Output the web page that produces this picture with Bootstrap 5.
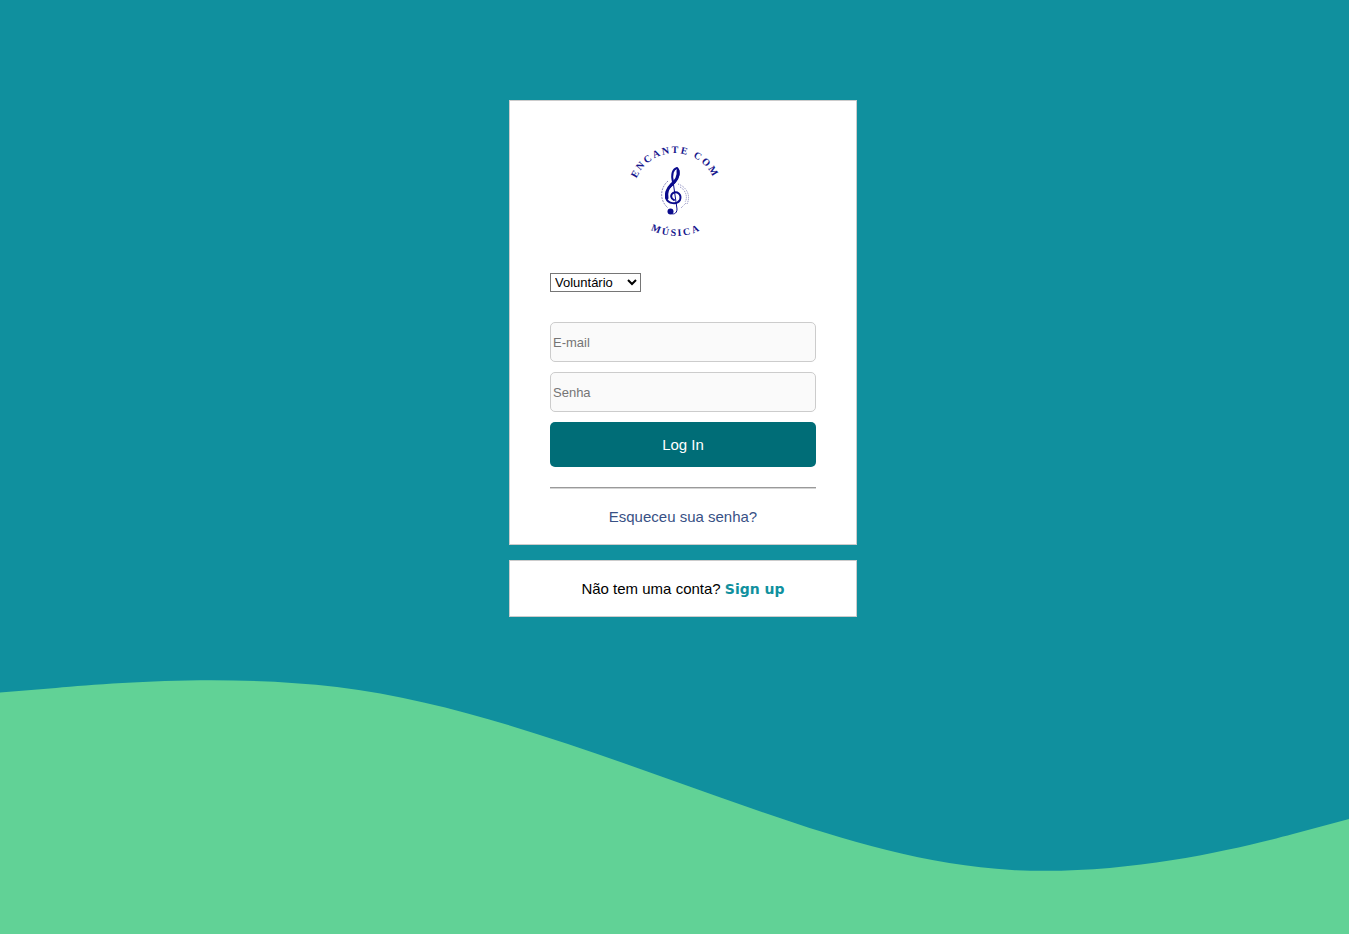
<!DOCTYPE html>
<html lang="pt-BR">
<head>
<meta charset="utf-8">
<meta name="viewport" content="width=device-width, initial-scale=1">
<title>Encante com Música</title>
<link rel="stylesheet" href="https://cdn.jsdelivr.net/npm/bootstrap@5.3.0/dist/css/bootstrap.min.css">
<style>
  body { background: #10909e; color: #000; font: 15px/17px "Liberation Sans", Arial, sans-serif; }
  .page-main { padding: 100px 0 60px 17px; }
  .login-col { width: 348px; max-width: 100%; gap: 15px; }
  .panel { background: #fff; border: 1px solid #ccc; }
  .panel-form { padding: 40px 40px 19px; }
  .panel-signup { padding: 19px 0; }
  .brand-logo { width: 250px; height: 100px; }
  .brand-logo text { font: 700 10px "Liberation Serif", serif; fill: #16168c; letter-spacing: 2px; }
  .role-select { width: 91px; height: 19px; margin: 32px 0 30px; padding: 0; border: 1px solid #767676; border-radius: 0; background: #fff; color: #000; font: 13px "Liberation Sans", Arial, sans-serif; }
  .field { height: 40px; margin-bottom: 10px; padding: 1px 2px; border: 1px solid #ccc; border-radius: 5px; background: #fafafa; font-size: 13px; }
  .field::placeholder { color: #757575; }
  .btn-login, .btn-login:hover { height: 45px; padding: 1px 0 0; border: 0; border-radius: 5px; background: #006d77; color: #fff; font-size: 15px; }
  .divider { margin: 20px 0 19px; height: 2px; border: 0; border-top: 1px solid #9a9a9a; border-bottom: 1px solid #d5d5d5; opacity: 1; }
  .link-forgot { color: #385185; }
  .link-signup { color: #10909e; font: 700 14px/15px "DejaVu Sans", sans-serif; }
</style>
</head>
<body class="d-flex flex-column min-vh-100">
<main class="page-main d-flex justify-content-center">
  <div class="login-col d-flex flex-column">
    <form class="panel panel-form d-flex flex-column">
      <svg class="brand-logo" viewBox="550 140 250 100" role="img" aria-label="Encante com Música">
        <defs>
          <path id="arcTop" d="M633 194A42 42 0 0 1 717 194"/>
          <path id="arcBottom" d="M621 180A55 55 0 0 0 731 180"/>
        </defs>
        <text text-anchor="middle"><textPath href="#arcTop" startOffset="50%">ENCANTE COM</textPath></text>
        <text text-anchor="middle"><textPath href="#arcBottom" startOffset="50%">MÚSICA</textPath></text>
        <g fill="none" stroke="#8d8dc0" stroke-dasharray="2 1">
          <path d="M668 180C660 187 659 199 668 207" stroke-width="1"/>
          <path d="M678 183C687 186 691 195 687 203M680 186C686 189 688 197 685 201M681 207L686 202" stroke-width="1" stroke-dasharray="1 1"/>
        </g>
        <g fill="none" stroke="#0b0b8c" stroke-linecap="round" stroke-linejoin="round">
          <path d="M673 181C671 173 673 168 677 167C680 170 679 177 673 183C667 188 665 192 666 197C668 203 677 204 680 199C682 193 677 190 673 192C670 194 671 198 674 199" stroke-width="2"/>
          <path d="M678 170C679 175 676 180 671 184C667 188 666 192 667 197" stroke-width="3"/>
          <path d="M673 180L677 208C677 213 673 214 670 212" stroke-width="1"/>
        </g>
        <circle cx="670.5" cy="210.5" r="3" fill="#0b0b8c"/>
      </svg>
      <select class="role-select" aria-label="Tipo de usuário">
        <option>Voluntário</option>
        <option>Aluno</option>
      </select>
      <input class="field w-100" type="email" placeholder="E-mail" aria-label="E-mail">
      <input class="field w-100" type="password" placeholder="Senha" aria-label="Senha">
      <button class="btn btn-login w-100" type="submit">Log In</button>
      <hr class="divider">
      <a class="link-forgot text-center text-decoration-none" href="#">Esqueceu sua senha?</a>
    </form>
    <div class="panel panel-signup text-center">
      Não tem uma conta? <a class="link-signup text-decoration-none" href="#">Sign up</a>
    </div>
  </div>
</main>
<svg class="d-block w-100 mt-auto" viewBox="0 679 1349 255" aria-hidden="true">
  <path fill="#61d296" d="M0 692.5L56 688C112 683 225 674 337 687C450 701 562 741 674 781C787 821 899 864 1012 870C1124 876 1237 849 1293 834L1349 819V934H0Z"/>
</svg>
<script src="https://cdn.jsdelivr.net/npm/bootstrap@5.3.0/dist/js/bootstrap.bundle.min.js"></script>
</body>
</html>
